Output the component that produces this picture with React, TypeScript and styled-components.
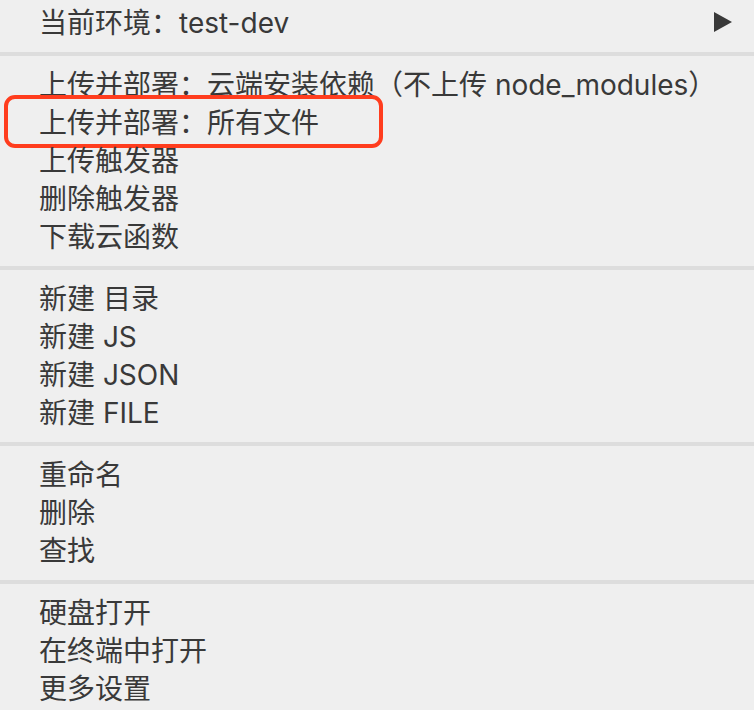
import React from "react";
import styled, { createGlobalStyle } from "styled-components";

const Global = createGlobalStyle`
  html, body { margin: 0; padding: 0; background: #efefef; }
  body { font-family: "Inter", "Noto Sans CJK SC", sans-serif; }
`;

const Menu = styled.div`
  width: 754px;
  height: 710px;
  box-sizing: border-box;
  padding-top: 3px;
  background: #efefef;
  display: flex;
  flex-direction: column;
  overflow: hidden;
  position: relative;
`;

const Group = styled.div`
  display: flex;
  flex-direction: column;
`;

const Separator = styled.div`
  height: 4px;
  background: #dddddd;
  margin: 11px 0 9px;
  flex-shrink: 0;
`;

const Item = styled.div<{ $highlighted?: boolean }>`
  position: relative;
  height: 38px;
  display: flex;
  align-items: center;
  justify-content: space-between;
  padding: 0 22px 0 39px;
  font-family: "Inter", "Noto Sans CJK SC", sans-serif;
  font-size: 28px;
  color: #393939;
  white-space: nowrap;

  ${(p) =>
    p.$highlighted &&
    `
    &::after {
      content: "";
      position: absolute;
      left: 4px;
      top: -8px;
      bottom: -7px;
      width: 379px;
      box-sizing: border-box;
      border: 4px solid #ff3d1e;
      border-radius: 11px;
      pointer-events: none;
    }
  `}
`;

const Label = styled.span`
  display: block;
  line-height: 38px;
  padding-top: 1px;
`;

const Arrow = styled.span`
  width: 0;
  height: 0;
  border-left: 18px solid #393939;
  border-top: 10px solid transparent;
  border-bottom: 10px solid transparent;
`;

type Entry = { label: string; submenu?: boolean; highlighted?: boolean };

const groups: Entry[][] = [
  [{ label: "当前环境：test-dev", submenu: true }],
  [
    { label: "上传并部署：云端安装依赖（不上传 node_modules）" },
    { label: "上传并部署：所有文件", highlighted: true },
    { label: "上传触发器" },
    { label: "删除触发器" },
    { label: "下载云函数" },
  ],
  [
    { label: "新建 目录" },
    { label: "新建 JS" },
    { label: "新建 JSON" },
    { label: "新建 FILE" },
  ],
  [{ label: "重命名" }, { label: "删除" }, { label: "查找" }],
  [{ label: "硬盘打开" }, { label: "在终端中打开" }, { label: "更多设置" }],
];

export default function App() {
  return (
    <>
      <Global />
      <Menu>
        {groups.map((g, gi) => (
          <React.Fragment key={gi}>
            {gi > 0 && <Separator />}
            <Group>
              {g.map((e) => (
                <Item key={e.label} $highlighted={e.highlighted}>
                  <Label>{e.label}</Label>
                  {e.submenu && <Arrow />}
                </Item>
              ))}
            </Group>
          </React.Fragment>
        ))}
      </Menu>
    </>
  );
}
